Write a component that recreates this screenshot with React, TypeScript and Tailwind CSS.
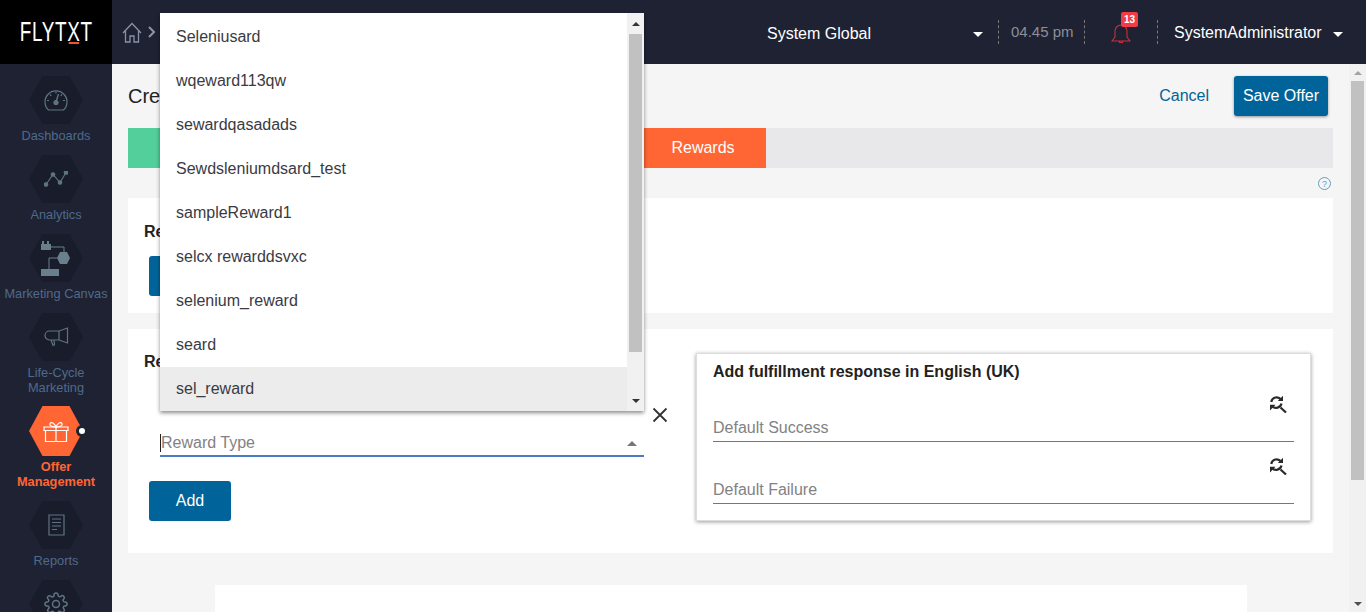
import React from "react";

const Hex = ({ active, children }: { active?: boolean; children: React.ReactNode }) => (
  <div className={`w-[54px] flex items-center justify-center [clip-path:polygon(25%_0,75%_0,100%_50%,75%_100%,25%_100%,0_50%)] ${active ? "h-[50px] bg-[#ff6633]" : "h-[48px] bg-[#181c2b]"}`}>
    {children}
  </div>
);

const G = "#5f7482";

const IconDash = () => (
  <svg width="24" height="22" viewBox="0 0 24 22" fill="none" stroke={G} strokeWidth="1.2">
    <path d="M4.500 21 A11 11 0 1 1 19.500 21 Z" strokeLinejoin="round" />
    <path d="M12 13 L14.500 5" strokeWidth="1.400" />
    <circle cx="12" cy="13.500" r="2" fill={G} />
    <path d="M3 11.500h2M19 11.500h2M6 5.500l1.300 1.300M18 5.500l-1.300 1.300M12 2.500v2" />
  </svg>
);
const IconAnalytics = () => (
  <svg width="24" height="16" viewBox="0 0 24 16" fill={G} stroke={G} strokeWidth="1.100">
    <path d="M2 13.500L9 3.500L16 11.500L22 1.500" fill="none" />
    <circle cx="2" cy="13.500" r="1.800" />
    <circle cx="9" cy="3.500" r="1.800" />
    <circle cx="16" cy="11.500" r="1.800" />
    <circle cx="22" cy="1.500" r="1.800" />
  </svg>
);
const IconCanvas = () => (
  <svg width="30" height="37" viewBox="0 0 30 37" fill="none" stroke="#6a7f8c" strokeWidth="1">
    <path d="M0 4h10v6H0zM1 1h2v3H1zM6 1h2v3H6z" fill="#6a7f8c" stroke="none" />
    <path d="M10 7h13v5" />
    <path d="M19 12h7l3 6-3 6h-7l-3-6z" fill="#6a7f8c" stroke="none" />
    <path d="M16 18H8v11" />
    <path d="M0 29h18v7H0z" fill="#6a7f8c" stroke="none" />
  </svg>
);
const IconMega = () => (
  <svg width="25" height="20" viewBox="0 0 25 20" fill="none" stroke={G} strokeWidth="1.200">
    <path d="M23.500 1v15L15 13H5.500a4.500 4.500 0 0 1 0-9H15z" />
    <path d="M15 4v9M7 13l2 5.500 1.500-.8-.5-4.700" />
  </svg>
);
const IconGift = () => (
  <svg width="26" height="21" viewBox="0 0 26 21" fill="none" stroke="#fff" strokeWidth="1.200">
    <path d="M1 6h24v3.500H1zM2.500 9.500h21V20.500h-21zM13 6v14.500" />
    <path d="M13 6C9 6 6 4.500 7 2.500S11.500 2 13 6C14.500 2 18 .5 19 2.500S17 6 13 6z" />
  </svg>
);
const IconReport = () => (
  <svg width="17" height="22" viewBox="0 0 17 22" fill="none" stroke={G} strokeWidth="1.200">
    <path d="M1 1h15v20H1z" />
    <path d="M4 5h9M4 8.500h9M4 12h9M4 15.500h5" />
  </svg>
);
const IconGear = () => (
  <svg width="24" height="24" viewBox="0 0 24 24" fill="none" stroke={G} strokeWidth="1.500">
    <circle cx="12" cy="12" r="3.500" />
    <path d="M19.400 15a1.650 1.650 0 0 0 .33 1.820l.06.06a2 2 0 1 1-2.830 2.830l-.06-.06a1.650 1.650 0 0 0-2.820 1.170V21a2 2 0 1 1-4 0v-.09a1.650 1.650 0 0 0-2.880-1.110l-.06.06a2 2 0 1 1-2.830-2.830l.06-.06A1.650 1.650 0 0 0 3.090 14H3a2 2 0 1 1 0-4h.09a1.650 1.650 0 0 0 1.110-2.880l-.06-.06a2 2 0 1 1 2.830-2.830l.06.06A1.650 1.650 0 0 0 10 3.090V3a2 2 0 1 1 4 0v.09a1.650 1.650 0 0 0 2.820 1.170l.06-.06a2 2 0 1 1 2.830 2.830l-.06.06A1.650 1.650 0 0 0 20.910 10H21a2 2 0 1 1 0 4h-.09a1.650 1.650 0 0 0-1.510 1z" />
  </svg>
);
const Caret = ({ up, color = "#fff", w = 10, h = 5, className }: { up?: boolean; color?: string; w?: number; h?: number; className?: string }) => (
  <svg className={className} width={w} height={h} viewBox="0 0 10 5" fill={color} preserveAspectRatio="none">
    <path d={up ? "M0 5L5 0L10 5Z" : "M0 0L10 0L5 5Z"} />
  </svg>
);
const SearchRefresh = () => (
  <svg width="18" height="18" viewBox="0 0 18 18" fill="none" stroke="#2a2a2a" strokeWidth="2.200">
    <path d="M2.200 7a5.500 5.500 0 0 1 9.800-2.500M12.500 8.500a5.500 5.500 0 0 1-9.500 2.500" />
    <path d="M11.500 12.500l5.500 5" />
    <path d="M14 .8v5.200H8.800zM1 15.500V9.800h5.500z" fill="#2a2a2a" stroke="none" />
  </svg>
);

const NavItem = ({ label, icon, active, h }: { label?: React.ReactNode; icon: React.ReactNode; active?: boolean; h: string }) => (
  <div className={`relative flex flex-col items-center shrink-0 ${h}`}>
    <Hex active={active}>{icon}</Hex>
    {active && (
      <div className="absolute left-[76px] top-[19px] w-[6px] h-[6px] rounded-full bg-white border-[3px] border-[#1e2233] box-content" />
    )}
    {label && (
      <div className={`text-center text-[12.8px] leading-[15px] whitespace-nowrap ${active ? "mt-[3px] text-[#ff6633] font-bold" : "mt-[4px] text-[#4f6a8b]"}`}>
        {label}
      </div>
    )}
  </div>
);

const Field = ({ label }: { label: string }) => (
  <div className="h-[62px] flex flex-col justify-end">
    <div className="flex justify-end pr-[7px] mb-[3px]"><SearchRefresh /></div>
    <div className="h-[26px] text-[16px] leading-[24px] text-[#828282] border-b border-[#777]">{label}</div>
  </div>
);

const items = ["Seleniusard", "wqeward113qw", "sewardqasadads", "Sewdsleniumdsard_test", "sampleReward1", "selcx rewarddsvxc", "selenium_reward", "seard", "sel_reward"];

export default function App() {
  return (
    <div className="relative w-[1366px] h-[612px] overflow-hidden bg-[#f5f5f5] font-['Liberation_Sans',sans-serif] text-[#222]">
      <header className="h-[64px] bg-[#1e2233] flex items-center">
        <div className="w-[112px] h-[64px] bg-black flex items-center justify-center text-white text-[27px] leading-[30px] shrink-0">
          <span className="relative scale-x-[0.7] tracking-[1px] block whitespace-nowrap">
            FLYT<span className="relative">X<span className="absolute left-[2px] right-[2px] bottom-[3px] h-[2px] bg-[#e8562a]" /></span>T
          </span>
        </div>
        <div className="ml-[10px] flex items-center gap-[6px]">
          <svg width="20" height="21" viewBox="0 0 20 21" fill="none" stroke="#8a93a5" strokeWidth="1.300">
            <path d="M1 11L10 1.500L19 11M3.500 9v11h4.500v-6h4v6h4.500V9" />
          </svg>
          <svg width="7" height="12" viewBox="0 0 7 12" fill="none" stroke="#8a93a5" strokeWidth="2"><path d="M1 1l5 5-5 5" /></svg>
        </div>
        <div className="flex-1" />
        <span className="mt-[4px] text-white text-[16px] w-[206px] whitespace-nowrap">System Global</span>
        <Caret className="mt-[4px]" />
        <div className="ml-[15px] h-[24px] border-l border-dashed border-[#777]" />
        <span className="ml-[12px] text-[#8b8f9a] text-[15px] w-[62px] whitespace-nowrap">04.45 pm</span>
        <div className="ml-[11px] h-[24px] border-l border-dashed border-[#777]" />
        <div className="relative ml-[26px] w-[20px] h-[24px] flex items-end">
          <svg width="20" height="22" viewBox="0 0 20 22" fill="none" stroke="#c9303a" strokeWidth="1.100">
            <path d="M1 19h18l-3-4V9a6 6 0 0 0-12 0v6zM8.500 19v1.500h3V19" />
          </svg>
          <span className="absolute left-[10px] top-[-8px] w-[17px] h-[15px] rounded-[2px] bg-[#f23b45] text-white text-[10px] leading-[15px] font-bold text-center">13</span>
        </div>
        <div className="ml-[26px] h-[24px] border-l border-dashed border-[#777]" />
        <span className="mt-[2px] ml-[16px] text-white text-[16px] w-[159px] whitespace-nowrap">SystemAdministrator</span>
        <Caret className="mt-[4px]" />
        <div className="w-[23px]" />
      </header>

      <div className="flex h-[548px]">
        <nav className="w-[112px] bg-[#1e2233] shrink-0 overflow-hidden pt-[12px] flex flex-col">
          <NavItem h="h-[79px]" label="Dashboards" icon={<IconDash />} />
          <NavItem h="h-[79px]" label="Analytics" icon={<IconAnalytics />} />
          <NavItem h="h-[79px]" label="Marketing Canvas" icon={<IconCanvas />} />
          <NavItem h="h-[93px]" label={<>Life-Cycle<br />Marketing</>} icon={<IconMega />} />
          <NavItem h="h-[95px]" active label={<>Offer<br />Management</>} icon={<IconGift />} />
          <NavItem h="h-[79px]" label="Reports" icon={<IconReport />} />
          <NavItem h="h-[48px]" icon={<IconGear />} />
        </nav>

        <main className="relative flex-1 overflow-hidden pl-[16px] pr-[33px]">
          <div className="flex items-center h-[64px] pr-[5px]">
            <span className="text-[20px] text-[#222]">Create Offer</span>
            <div className="flex-1" />
            <span className="text-[16px] text-[#00649a] mr-[25px]">Cancel</span>
            <button className="w-[94px] h-[40px] rounded-[3px] bg-[#00649a] text-white text-[16px] shadow-[0_1px_3px_rgba(0,0,0,0.4)]">Save Offer</button>
          </div>
          <div className="flex h-[40px] bg-[#e8e8ea]">
            <div className="w-[120px] bg-[#52cf9a]" />
            <div className="ml-[392px] w-[126px] bg-[#ff6633] text-white text-[16px] flex items-center justify-center">Rewards</div>
          </div>
          <div className="h-[30px] flex justify-end items-center pr-[2px]">
            <svg width="13" height="13" viewBox="0 0 13 13" fill="none" stroke="#5aa2c6" strokeWidth="1">
              <circle cx="6.500" cy="6.500" r="6" />
              <text x="6.500" y="9.800" textAnchor="middle" fontSize="9" fill="#5aa2c6" stroke="none">?</text>
            </svg>
          </div>
          <section className="h-[115px] bg-white pl-[16px] pt-[24px]">
            <div className="text-[16px] font-bold text-[#222] leading-[19px]">Reward Details</div>
            <div className="mt-[15px] ml-[5px] w-[82px] h-[40px] rounded-[3px] bg-[#00649a]" />
          </section>
          <section className="mt-[16px] h-[224px] bg-white relative flex">
            <div className="w-[568px] pl-[16px] pt-[23px] shrink-0">
              <div className="text-[16px] font-bold text-[#222] leading-[19px]">Reward</div>
              <div className="ml-[16px] mt-[54px] w-[484px] h-[32px] pt-[6px] border-b-2 border-[#4a7cc4] flex items-center justify-between pr-[7px]">
                <span className="text-[16px] text-[#828282] border-l border-[#222] leading-[18px]">Reward Type</span>
                <Caret up color="#777" />
              </div>
              <button className="mt-[24px] ml-[5px] w-[82px] h-[40px] rounded-[3px] bg-[#00649a] text-white text-[16px]">Add</button>
            </div>
            <svg className="absolute left-[524px] top-[78px]" width="16" height="16" viewBox="0 0 16 16" stroke="#333" strokeWidth="1.800"><path d="M1.500 1.500l13 13M14.500 1.500l-13 13" /></svg>
            <div className="mt-[24px] w-[615px] h-[168px] bg-white border border-[#ddd] shadow-[0_1px_4px_rgba(0,0,0,0.4)] px-[16px] pt-[8px]">
              <div className="text-[16px] font-bold leading-[20px] text-[#222] whitespace-nowrap">Add fulfillment response in English (UK)</div>
              <div className="-mt-[2px]">
                <Field label="Default Success" />
                <Field label="Default Failure" />
              </div>
            </div>
          </section>
          <div className="mt-[32px] ml-[87px] w-[1032px] h-[100px] bg-white" />
        </main>

        <div className="absolute right-0 top-[64px] w-[17px] h-[548px] bg-[#f1f1f1] flex flex-col items-center">
          <div className="h-[17px] flex items-center"><Caret up color="#a3a3a3" w={8} h={4} /></div>
          <div className="w-[13px] h-[399px] bg-[#c1c1c1]" />
          <div className="flex-1" />
          <div className="h-[17px] flex items-center"><Caret color="#505050" w={8} h={4} /></div>
        </div>
      </div>

      <div className="absolute left-[160px] top-[13px] w-[484px] h-[398px] bg-white shadow-[0_2px_4px_rgba(0,0,0,0.45)] flex">
        <div className="flex-1 min-w-0 pt-[2px]">
          {items.map((t, i) => (
            <div key={t} className={`h-[44px] pl-[16px] flex items-center text-[16px] text-[#3a3a44] ${i === 8 ? "bg-[#ececec]" : ""}`}>{t}</div>
          ))}
        </div>
        <div className="w-[17px] bg-[#f1f1f1] flex flex-col items-center">
          <div className="h-[21px] flex items-center"><Caret up color="#333" w={8} h={4} /></div>
          <div className="w-[13px] h-[318px] bg-[#c1c1c1]" />
          <div className="flex-1" />
          <div className="h-[20px] flex items-center"><Caret color="#333" w={8} h={4} /></div>
        </div>
      </div>
    </div>
  );
}
